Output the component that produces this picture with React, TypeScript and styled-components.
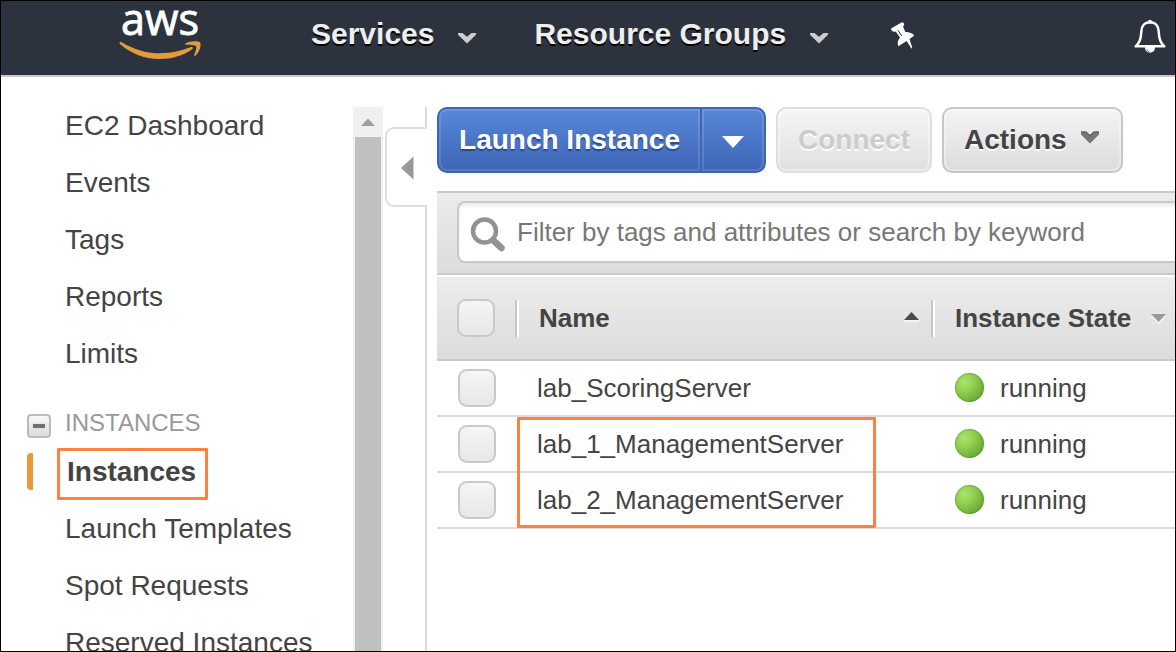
import React from "react";
import styled, { createGlobalStyle, css } from "styled-components";

const GlobalStyle = createGlobalStyle`
  *, *::before, *::after { box-sizing: border-box; }
  body {
    margin: 0;
    overflow: hidden;
    background: #fff;
    color: #444;
    font-family: "Liberation Sans", Arial, sans-serif;
  }
  button { font-family: inherit; }
`;

const Frame = styled.div`
  position: relative;
  display: flex;
  flex-direction: column;
  width: 1176px;
  height: 652px;
  overflow: hidden;
  border: 1px solid #000;
`;

const NavBar = styled.header`
  display: flex;
  align-items: flex-start;
  flex: none;
  height: 76px;
  padding-left: 117px;
  background: #2c333f;
  border-bottom: 2px solid #c9c9cc;
`;

const Logo = styled.svg`
  display: block;
  flex: none;
  width: 86px;
  height: 62px;
`;

const NavMenu = styled.div<{ $gap: number }>`
  display: flex;
  align-items: center;
  gap: 23px;
  height: 66px;
  margin-left: ${(p) => p.$gap}px;
  color: #eee;
  font-size: 30px;
  font-weight: bold;
  white-space: nowrap;
  text-shadow: 0 2px 0 #000;
`;

const NavChevron = styled.svg`
  width: 20px;
  height: 12px;
  margin-top: 8px;
`;

const PinIcon = styled.svg`
  width: 28px;
  height: 30px;
  margin: 20px 0 0 60px;
`;

const BellIcon = styled.svg`
  width: 34px;
  height: 36px;
  margin: 18px 8px 0 auto;
`;

const Body = styled.div`
  display: flex;
  flex: 1;
  min-height: 0;
`;

const Sidebar = styled.nav`
  flex: none;
  width: 352px;
  padding-top: 20px;
  overflow: hidden;
`;

const NavItem = styled.a`
  display: block;
  height: 57px;
  padding-left: 64px;
  font-size: 28px;
  line-height: 57px;
  white-space: nowrap;
`;

const SectionTitle = styled.div`
  display: flex;
  align-items: center;
  gap: 14px;
  height: 54px;
  margin-top: 14px;
  padding-left: 26px;
  color: #999;
  font-size: 24px;
`;

const Toggle = styled.span`
  display: flex;
  align-items: center;
  justify-content: center;
  width: 24px;
  height: 24px;
  margin-top: 5px;
  border: 2px solid #bbb;
  border-radius: 4px;
  background: linear-gradient(#f8f8f8, #dcdcdc);

  &::after {
    content: "";
    width: 12px;
    height: 4px;
    background: #707070;
    box-shadow: 0 0 1px #999;
  }
`;

const ActiveRow = styled.div`
  display: flex;
  align-items: center;
  height: 50px;
  margin: -3px 0 3px;
  padding-left: 26px;
`;

const ActiveMarker = styled.span`
  width: 6px;
  height: 37px;
  margin-bottom: 2px;
  border-radius: 4px 0 0 4px;
  background: #e79b38;
`;

const ActiveItem = styled.a`
  display: block;
  width: 151px;
  height: 52px;
  margin: 4px 0 0 24px;
  padding-left: 7px;
  border: 3px solid #ff8142;
  border-radius: 1px;
  font-size: 28px;
  font-weight: bold;
  line-height: 41px;
`;

const ScrollTrack = styled.div`
  display: flex;
  flex-direction: column;
  flex: none;
  width: 30px;
  margin-top: 30px;
  background: #eef1f0;
`;

const ScrollUp = styled.svg`
  flex: none;
  width: 30px;
  height: 30px;
`;

const ScrollThumb = styled.div`
  flex: 1;
  margin: 0 2px;
  background: #bfc1c0;
`;

const Splitter = styled.div`
  display: flex;
  flex-direction: column;
  flex: none;
  width: 44px;
  margin-top: 30px;
  padding-left: 2px;
`;

const SplitterLine = styled.div<{ $height?: number }>`
  ${(p) => (p.$height ? css`height: ${p.$height}px;` : css`flex: 1;`)}
  border-right: 2px solid #dadada;
`;

const SplitterHandle = styled.div`
  display: flex;
  align-items: center;
  height: 80px;
  padding: 2px 0 0 14px;
  border: 2px solid #dfdfdf;
  border-right: 0;
  border-radius: 9px 0 0 9px;
`;

const Main = styled.main`
  display: flex;
  flex-direction: column;
  flex: 1;
  min-width: 0;
  padding: 30px 0 0 10px;
`;

const Toolbar = styled.div`
  display: flex;
  gap: 10px;
  height: 66px;
  margin-bottom: 18px;
`;

const PrimaryGroup = styled.div`
  display: flex;
  width: 329px;
  border: 2px solid #3c66b4;
  border-radius: 10px;
  overflow: hidden;
  background: linear-gradient(#5788d9, #3f64b4);
`;

const PrimaryButton = styled.button<{ $menu?: boolean }>`
  flex: none;
  width: ${(p) => (p.$menu ? "62px" : "261px")};
  padding: ${(p) => (p.$menu ? "0 0 2px" : "0")};
  border: 0;
  background: transparent;
  box-shadow: inset 0 0 0 2px rgba(255, 255, 255, 0.13);
  border-radius: ${(p) => (p.$menu ? "0 8px 8px 0" : "8px 0 0 8px")};
  color: #fff;
  font-size: 28px;
  font-weight: bold;
  white-space: nowrap;
  text-shadow: 0 2px 1px rgba(20, 40, 100, 0.55);
`;

const PrimaryDivider = styled.span`
  width: 2px;
  background: #3c66b4;
`;

const GreyButton = styled.button<{ $width: number; $muted?: boolean }>`
  display: flex;
  align-items: center;
  gap: 14px;
  width: ${(p) => p.$width}px;
  padding: 0 0 0 20px;
  border: 2px solid ${(p) => (p.$muted ? "#dedede" : "#c6c6c6")};
  border-radius: 10px;
  background: ${(p) =>
    p.$muted ? "linear-gradient(#f5f5f5, #e0e0e0)" : "linear-gradient(#f4f4f4, #dcdcdc)"};
  box-shadow: inset 0 0 0 2px rgba(255, 255, 255, 0.35);
  color: ${(p) => (p.$muted ? "#ccc" : "#444")};
  font-size: 28px;
  font-weight: bold;
  text-shadow: 0 2px 0 #fff;
`;

const ActionsChevron = styled.svg`
  width: 20px;
  height: 15px;
  margin: 0 0 6px -1px;
`;

const FilterBar = styled.div`
  display: flex;
  height: 84px;
  padding: 8px 0 0 20px;
  border: solid #c9c9c9;
  border-width: 2px 0;
  background: linear-gradient(#ececec, #dcdcdc);
`;

const SearchBox = styled.div`
  display: flex;
  align-items: center;
  flex: 1;
  height: 62px;
  border: 2px solid #c9c9c9;
  border-right: 0;
  border-radius: 8px 0 0 8px;
  padding-left: 11px;
  background: #fff;
  box-shadow: inset 0 3px 4px -1px #e4e4e4;
  color: #777;
  font-size: 26px;
  white-space: nowrap;
`;

const SearchIcon = styled.svg`
  flex: none;
  width: 38px;
  height: 38px;
  margin: 5px 9px 0 0;
`;

const Table = styled.div`
  position: relative;
  margin-top: 2px;
`;

const HeaderRow = styled.div`
  display: grid;
  grid-template-columns: 78px 416px 1fr;
  align-items: center;
  height: 84px;
  border-bottom: 2px solid #c9c9c9;
  background: linear-gradient(#ececec, #dcdcdc);
  font-size: 26px;
  font-weight: bold;
`;

const HeaderCell = styled.div<{ $rightPad: number }>`
  display: flex;
  align-items: center;
  justify-content: space-between;
  height: 37px;
  padding: 0 ${(p) => p.$rightPad}px 0 22px;
  border-left: 2px solid #c6c6c6;
  box-shadow: inset 2px 0 0 #fff;
  white-space: nowrap;
`;

const SortArrow = styled.svg<{ $raise?: number }>`
  width: 15px;
  height: 11px;
  margin-bottom: ${(p) => p.$raise ?? 0}px;
`;

const CheckBox = styled.span<{ $offset: number }>`
  width: 38px;
  height: 38px;
  margin-left: ${(p) => p.$offset}px;
  border: 2px solid #c9c9c9;
  border-radius: 9px;
  background: linear-gradient(#f5f5f5, #e7e7e7);
`;

const Row = styled.div`
  display: grid;
  grid-template-columns: 100px 418px 1fr;
  align-items: center;
  height: 56px;
  border-bottom: 2px solid #dcdcdc;
  font-size: 26px;
  white-space: nowrap;
`;

const State = styled.div`
  display: flex;
  align-items: center;
  gap: 16px;
`;

const StatusDot = styled.span`
  width: 29px;
  height: 29px;
  margin-top: -1px;
  border-radius: 50%;
  background: radial-gradient(circle at 32% 30%, #abe66c 0%, #8fcc50 38%, #6cae35 72%, #478b1c 100%);
  box-shadow: inset 0 0 1px 1px rgba(85, 145, 40, 0.45);
`;

const Highlight = styled.div`
  position: absolute;
  top: 140px;
  left: 80px;
  width: 359px;
  height: 111px;
  border: 3px solid #ff8142;
  border-radius: 1px;
`;

const MenuChevron = () => (
  <NavChevron viewBox="0 0 20 12">
    <path d="M1 1h4.500L10 4.800 14.500 1H19v1.800L10 11.500 1 2.800z" fill="#ccc" />
  </NavChevron>
);

const servers = ["lab_ScoringServer", "lab_1_ManagementServer", "lab_2_ManagementServer"];

export default function App() {
  return (
    <>
      <GlobalStyle />
      <Frame>
        <NavBar>
          <Logo viewBox="0 0 86 62">
            <text
              x="3"
              y="34"
              fill="#fff"
              stroke="#fff"
              strokeWidth="0.9"
              fontFamily="Open Sans, Noto Sans, sans-serif"
              fontSize="43.5"
              textLength="78"
              lengthAdjust="spacingAndGlyphs"
            >
              aws
            </text>
            <path
              d="M1.500 41.500c0-1 1-.9 2-.3C15 48 28 52.300 42 52.300c11 0 22-2.600 31-6.200 1.500-.6 2.600.8 1.300 1.900C65.500 54.800 53 58 41.500 58 26 58 12.500 52 2.200 43.200c-.5-.5-.7-1-.7-1.700z"
              fill="#e49b39"
            />
            <path
              d="M67.500 42.500c4-2.600 11.500-2.800 14.500-1.200 1.600 2.800-.4 10-4.600 13.400-.9.700-1.600.3-1.200-.7 1-2.600 2.800-7.300 1.900-8.800-1.200-1.400-6.600-1.100-9.800-1.400-1.100-.1-1.500-.7-.8-1.300z"
              fill="#e49b39"
            />
          </Logo>
          <NavMenu $gap={107}>
            Services
            <MenuChevron />
          </NavMenu>
          <NavMenu $gap={57}>
            Resource Groups
            <MenuChevron />
          </NavMenu>
          <PinIcon viewBox="0 0 28 30">
            <path
              d="M2 7.500 13 1.200c2.200.1 3 3 1 4.300l2.300 5.500c4-.1 7.500 1 8.800 3.800L20.500 18l2.800 9-.9.400L17.700 20l-8.400 5.200c-1.300-3.100-.5-5.800 1.700-8.600L6.700 10.500C4.700 11.500 2 10 2 7.500z"
              fill="#fff"
            />
            <path d="m8.800 9.200 4 5.800" stroke="#2c333f" strokeWidth="1" />
          </PinIcon>
          <BellIcon viewBox="0 0 34 36" fill="none">
            <path
              d="M17 3.300c-5.500 0-8.500 3.700-8.700 9.200-.3 8-1.800 11.200-5.600 14.800h28.600c-3.800-3.600-5.300-6.800-5.600-14.800C25.500 7 22.500 3.300 17 3.300z"
              stroke="#fff"
              strokeWidth="2.500"
              strokeLinejoin="round"
            />
            <circle cx="17" cy="2.700" r="2" fill="#fff" />
            <path d="M12 28h10c.5 7.500-10.500 7.500-10 0z" fill="#fff" />
            <path d="M14 30.500c.3 1.300 1.200 2 2.500 2.200" stroke="#2c333f" strokeWidth=".8" />
          </BellIcon>
        </NavBar>
        <Body>
          <Sidebar>
            <NavItem>EC2 Dashboard</NavItem>
            <NavItem>Events</NavItem>
            <NavItem>Tags</NavItem>
            <NavItem>Reports</NavItem>
            <NavItem>Limits</NavItem>
            <SectionTitle>
              <Toggle />
              INSTANCES
            </SectionTitle>
            <ActiveRow>
              <ActiveMarker />
              <ActiveItem>Instances</ActiveItem>
            </ActiveRow>
            <NavItem>Launch Templates</NavItem>
            <NavItem>Spot Requests</NavItem>
            <NavItem>Reserved Instances</NavItem>
          </Sidebar>
          <ScrollTrack>
            <ScrollUp viewBox="0 0 30 30">
              <path d="M8 19 15 11.500 22 19z" fill="#a0a0a0" />
            </ScrollUp>
            <ScrollThumb />
          </ScrollTrack>
          <Splitter>
            <SplitterLine $height={20} />
            <SplitterHandle>
              <svg width="13" height="24" viewBox="0 0 13 24">
                <path d="M0 12 12.500 .5v23z" fill="#999" />
              </svg>
            </SplitterHandle>
            <SplitterLine />
          </Splitter>
          <Main>
            <Toolbar>
              <PrimaryGroup>
                <PrimaryButton>Launch Instance</PrimaryButton>
                <PrimaryDivider />
                <PrimaryButton $menu>
                  <svg width="22" height="12" viewBox="0 0 22 12">
                    <path d="M0 0h22L11 12z" fill="#fff" />
                  </svg>
                </PrimaryButton>
              </PrimaryGroup>
              <GreyButton $width={156} $muted>
                Connect
              </GreyButton>
              <GreyButton $width={181}>
                Actions
                <ActionsChevron viewBox="0 0 20 15">
                  <path d="M1 1.500h5l4 3.700 4-3.700h5v3L10 13.500 1 4.500z" fill="#777" />
                  <path d="M1 2h5l4 3.700L14 2h5" stroke="#5a5a5a" strokeWidth="1.200" fill="none" />
                </ActionsChevron>
              </GreyButton>
            </Toolbar>
            <FilterBar>
              <SearchBox>
                <SearchIcon viewBox="0 0 38 38" fill="none" stroke="#929292">
                  <circle cx="14.500" cy="15" r="11.500" strokeWidth="4.500" />
                  <path d="m24 25 7.500 7" strokeWidth="6.500" strokeLinecap="round" />
                </SearchIcon>
                Filter by tags and attributes or search by keyword
              </SearchBox>
            </FilterBar>
            <Table>
              <HeaderRow>
                <CheckBox $offset={20} />
                <HeaderCell $rightPad={12}>
                  Name
                  <SortArrow viewBox="0 0 15 11" $raise={4}>
                    <path d="M0 9h15v2H0z" fill="#f5f5f5" />
                    <path d="M0 9 7.500 1 15 9z" fill="#4a4a4a" />
                  </SortArrow>
                </HeaderCell>
                <HeaderCell $rightPad={9}>
                  Instance State
                  <SortArrow viewBox="0 0 15 11">
                    <path d="M0 3h15L7.500 11z" fill="#f7f7f7" />
                    <path d="M0 1h15L7.500 9z" fill="#999" />
                  </SortArrow>
                </HeaderCell>
              </HeaderRow>
              {servers.map((name) => (
                <Row key={name}>
                  <CheckBox $offset={21} />
                  <span>{name}</span>
                  <State>
                    <StatusDot />
                    running
                  </State>
                </Row>
              ))}
              <Highlight />
            </Table>
          </Main>
        </Body>
      </Frame>
    </>
  );
}
